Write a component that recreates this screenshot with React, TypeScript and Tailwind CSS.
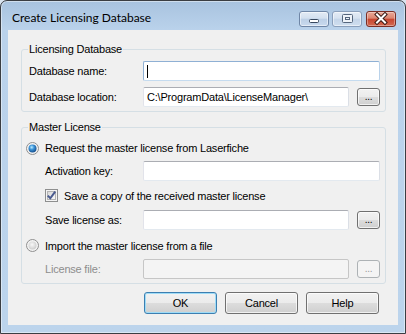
import React from 'react';

const btnBase =
  'h-[22px] w-[73px] rounded-[3px] border text-[11px] leading-none flex items-center justify-center bg-[linear-gradient(#f2f2f2_0%,#ebebeb_50%,#dddddd_50%,#cfcfcf_100%)]';

function Radio({ checked }: { checked?: boolean }) {
  return (
    <svg width="13" height="13" viewBox="0 0 13 13" className="shrink-0">
      <defs>
        <radialGradient id="rg-off" cx="0.45" cy="0.4" r="0.6">
          <stop offset="0" stopColor="#f8f8f8" />
          <stop offset="1" stopColor="#cdcdcd" />
        </radialGradient>
        <radialGradient id="rg-on" cx="0.4" cy="0.35" r="0.65">
          <stop offset="0" stopColor="#bdeeff" />
          <stop offset="0.45" stopColor="#3b93d8" />
          <stop offset="1" stopColor="#17508e" />
        </radialGradient>
      </defs>
      <circle cx="6.5" cy="6.5" r="6" fill="#f3f3f3" stroke="#8f8f8f" />
      <circle cx="6.5" cy="6.5" r="4" fill={checked ? 'url(#rg-on)' : 'url(#rg-off)'} />
    </svg>
  );
}

function Checkbox() {
  return (
    <svg width="13" height="13" viewBox="0 0 13 13" className="shrink-0">
      <defs>
        <linearGradient id="cb-in" x1="0" y1="0" x2="1" y2="1">
          <stop offset="0" stopColor="#d6d6d6" />
          <stop offset="1" stopColor="#fbfbfb" />
        </linearGradient>
      </defs>
      <rect x="0.5" y="0.5" width="12" height="12" fill="#f4f4f4" stroke="#8e8f8f" />
      <rect x="2.5" y="2.5" width="8" height="8" fill="url(#cb-in)" stroke="#b4b4b4" />
      <path d="M2.8 6.6 L5.3 9.3 L10.2 2.6" fill="none" stroke="#4a5b8f" strokeWidth="2" />
    </svg>
  );
}

function TextBox({ w, value, focus, disabled }: { w: string; value?: string; focus?: boolean; disabled?: boolean }) {
  const cls = disabled
    ? 'bg-[#f4f4f4] border-[#c6c6c6]'
    : focus
      ? 'bg-white border-[#8fb0d4] border-b-[#c5dbef] border-r-[#b9d2ea]'
      : 'bg-white border-[#abadb3] border-b-[#e3e9ef] border-r-[#dbdfe6] border-l-[#e2e3ea]';
  return (
    <div className={`${w} h-[20px] border rounded-[2px] flex items-center pl-[3px] ${cls}`}>
      {focus && <div className="w-px h-[13px] bg-black" />}
      {value && <span className="text-black whitespace-nowrap">{value}</span>}
    </div>
  );
}

function Browse({ disabled }: { disabled?: boolean }) {
  return (
    <div
      className={`w-[23px] h-[18px] rounded-[3px] border flex items-end justify-center pb-[3px] text-[10px] leading-none ${
        disabled
          ? 'border-[#adb2b5] bg-[#f4f4f4] text-[#9a9a9a]'
          : 'border-[#707070] text-black bg-[linear-gradient(#f2f2f2_0%,#ebebeb_50%,#dddddd_50%,#cfcfcf_100%)] shadow-[inset_0_0_0_1px_rgba(255,255,255,0.7)]'
      }`}
    >
      ...
    </div>
  );
}

function Group({ title, children, className }: { title: string; children: React.ReactNode; className?: string }) {
  return (
    <div className={`relative ml-[13px] w-[365px] border border-[#d5dfe5] rounded-[3px] ${className ?? ''}`}>
      <span className="absolute -top-[8px] left-[6px] px-[1px] bg-[#f0f0f0] leading-[14px] text-black">
        {title}
      </span>
      {children}
    </div>
  );
}

export default function App() {
  return (
    <div className="w-[406px] h-[334px] bg-[#d9e4f0] font-['Liberation_Sans',Arial,sans-serif] select-none">
      <div className="h-full flex flex-col rounded-t-[7px] border border-[#3a3d42] bg-[linear-gradient(#a8c3df,#bad2eb_29px,#bcd4ec)] shadow-[inset_0_0_0_1px_rgba(255,255,255,0.45)]">
        {/* Title bar */}
        <div className="h-[29px] flex items-start pt-[9px] pl-[11px] pr-[9px] shrink-0">
          <span className="font-['Lato',sans-serif] text-[12px] leading-[16px] text-black">
            Create Licensing Database
          </span>
          <div className="flex-1" />
          <div className="flex mt-[1px]">
            <div className="w-[30px] h-[16px] rounded-[3px] border border-[#6f86a6] bg-[linear-gradient(#e3ebf5_0%,#d3e0ef_45%,#bccfe6_50%,#c9daee_100%)] shadow-[inset_0_0_0_1px_rgba(255,255,255,0.5)]">
              <svg width="28" height="14" viewBox="0 0 28 14">
                <rect x="9.5" y="7.5" width="9" height="3" rx="1" fill="#ffffff" stroke="#37475e" />
              </svg>
            </div>
            <div className="ml-[3px] w-[30px] h-[16px] rounded-[3px] border border-[#8a9fbb] bg-[linear-gradient(#e3ebf5_0%,#d6e2f0_45%,#c4d5e9_50%,#cfdeef_100%)] shadow-[inset_0_0_0_1px_rgba(255,255,255,0.5)]">
              <svg width="28" height="14" viewBox="0 0 28 14">
                <rect x="9.5" y="2.5" width="10" height="8" rx="1" fill="#eef3f9" stroke="#55667d" />
                <rect x="12.5" y="5.5" width="4" height="2" fill="none" stroke="#55667d" />
              </svg>
            </div>
            <div className="ml-[4px] w-[30px] h-[16px] rounded-[3px] border border-[#7b2e25] bg-[linear-gradient(#e9a897_0%,#dc8570_45%,#c7452f_50%,#d36a52_100%)] shadow-[inset_0_0_0_1px_rgba(255,255,255,0.35)]">
              <svg width="28" height="14" viewBox="0 0 28 14">
                <path d="M10 2.5 L18 10.5 M18 2.5 L10 10.5" stroke="#3b1a14" strokeWidth="4" strokeLinecap="square" />
                <path d="M10 2.5 L18 10.5 M18 2.5 L10 10.5" stroke="#ffffff" strokeWidth="2" strokeLinecap="square" />
              </svg>
            </div>
          </div>
        </div>

        {/* Client area */}
        <div className="mx-[7px] h-[295px] bg-[#f0f0f0] text-[11px] tracking-[-0.2px] text-black leading-[14px] pt-[19px]">
          <Group title="Licensing Database" className="pt-[11px] pb-[4px]">
            <div className="flex items-center pl-[7px] h-[20px]">
              <span className="w-[114px]">Database name:</span>
              <TextBox w="w-[237px]" focus />
            </div>
            <div className="flex items-center pl-[7px] h-[20px] mt-[6px]">
              <span className="w-[114px]">Database location:</span>
              <TextBox w="w-[206px]" value="C:\ProgramData\LicenseManager\" />
              <div className="ml-[8px]">
                <Browse />
              </div>
            </div>
          </Group>

          <Group title="Master License" className="mt-[15px] pt-[13px] pb-[4px]">
            <div className="flex items-center pl-[4px] h-[14px] gap-[6px]">
              <Radio checked />
              <span>Request the master license from Laserfiche</span>
            </div>
            <div className="flex items-center pl-[23px] h-[20px] mt-[6px]">
              <span className="w-[98px]">Activation key:</span>
              <TextBox w="w-[237px]" />
            </div>
            <div className="flex items-center pl-[23px] h-[13px] mt-[8px] gap-[6px]">
              <Checkbox />
              <span>Save a copy of the received master license</span>
            </div>
            <div className="flex items-center pl-[23px] h-[20px] mt-[8px]">
              <span className="w-[98px]">Save license as:</span>
              <TextBox w="w-[206px]" />
              <div className="ml-[8px]">
                <Browse />
              </div>
            </div>
            <div className="flex items-center pl-[4px] h-[13px] mt-[9px] gap-[6px]">
              <Radio />
              <span>Import the master license from a file</span>
            </div>
            <div className="flex items-center pl-[23px] h-[20px] mt-[7px]">
              <span className="w-[98px] text-[#8d8d8d]">License file:</span>
              <TextBox w="w-[206px]" disabled />
              <div className="ml-[8px]">
                <Browse disabled />
              </div>
            </div>
          </Group>

          <div className="flex gap-[8px] ml-[136px] mt-[8px]">
            <button className={`${btnBase} border-[#3c7fb1] shadow-[inset_0_0_0_1px_#9fdcf7]`}>OK</button>
            <button className={`${btnBase} border-[#707070] shadow-[inset_0_0_0_1px_rgba(255,255,255,0.7)]`}>Cancel</button>
            <button className={`${btnBase} border-[#707070] shadow-[inset_0_0_0_1px_rgba(255,255,255,0.7)]`}>Help</button>
          </div>
        </div>
      </div>
    </div>
  );
}
